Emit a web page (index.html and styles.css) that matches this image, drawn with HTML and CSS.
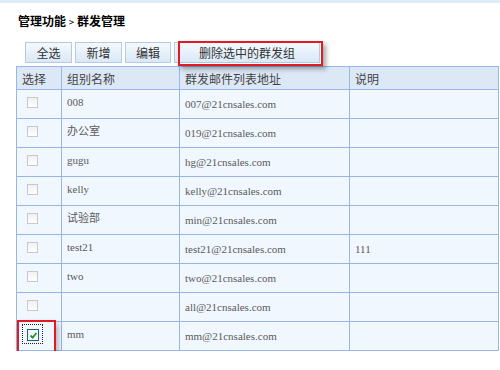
FILE: index.html
```html
<!DOCTYPE html>
<html lang="zh">
<head>
  <meta charset="UTF-8">
  <title>群发管理</title>
  <link rel="stylesheet" href="styles.css">
</head>
<body>
  <h1 class="title">管理功能 <span class="sep">&gt;</span> 群发管理</h1>

  <div class="toolbar">
    <button class="btn">全选</button>
    <button class="btn">新增</button>
    <button class="btn btn-narrow">编辑</button>
    <span class="callout"><button class="btn btn-wide">删除选中的群发组</button></span>
  </div>

  <table class="groups">
    <colgroup>
      <col class="c-pick"><col class="c-name"><col class="c-mail"><col class="c-note">
    </colgroup>
    <thead>
      <tr><th>选择</th><th>组别名称</th><th>群发邮件列表地址</th><th>说明</th></tr>
    </thead>
    <tbody>
      <tr><td class="pick"><span class="box"></span></td><td class="name">008</td><td class="mail">007@21cnsales.com</td><td class="mail"></td></tr>
      <tr><td class="pick"><span class="box"></span></td><td class="name">办公室</td><td class="mail">019@21cnsales.com</td><td class="mail"></td></tr>
      <tr><td class="pick"><span class="box"></span></td><td class="name">gugu</td><td class="mail">hg@21cnsales.com</td><td class="mail"></td></tr>
      <tr><td class="pick"><span class="box"></span></td><td class="name">kelly</td><td class="mail">kelly@21cnsales.com</td><td class="mail"></td></tr>
      <tr><td class="pick"><span class="box"></span></td><td class="name">试验部</td><td class="mail">min@21cnsales.com</td><td class="mail"></td></tr>
      <tr><td class="pick"><span class="box"></span></td><td class="name">test21</td><td class="mail">test21@21cnsales.com</td><td class="mail">111</td></tr>
      <tr><td class="pick"><span class="box"></span></td><td class="name">two</td><td class="mail">two@21cnsales.com</td><td class="mail"></td></tr>
      <tr><td class="pick"><span class="box"></span></td><td class="name"></td><td class="mail">all@21cnsales.com</td><td class="mail"></td></tr>
      <tr>
        <td class="pick marked">
          <span class="focus"><span class="box checked">
            <svg width="9" height="9" viewBox="0 0 9 9"><path d="M1.5 4.5 L3.6 6.6 L7.5 2" fill="none" stroke="#1d9a1d" stroke-width="1.8"/></svg>
          </span></span>
        </td>
        <td class="name">mm</td><td class="mail">mm@21cnsales.com</td><td class="mail"></td>
      </tr>
    </tbody>
  </table>
</body>
</html>
```

FILE: styles.css
```css
/* 群发管理页面 */
body {
  margin: 0;
  font-family: "Liberation Serif", "Noto Sans CJK SC", serif;
  font-size: 12px;
  color: #555;
  background: #fff;
  border-top: 3px solid #deebf8;
}
.title {
  margin: 0;
  padding: 9px 0 0 18px;
  font: bold 12px/18px "Noto Sans CJK SC", sans-serif;
  color: #000;
}
.title .sep {
  font-size: 10px;
  font-weight: normal;
}
/* 按钮栏 */
.toolbar {
  display: flex;
  gap: 3px;
  margin-top: 11px;
  padding-left: 25px;
}
.btn {
  width: 47px;
  height: 21px;
  padding: 0;
  border: 1px solid #b3cbe8;
  background: linear-gradient(#f5f9fd, #dae8f7);
  font: 12px "Noto Sans CJK SC", sans-serif;
  color: #333;
}
.btn-narrow {
  width: 46px;
}
.btn-wide {
  width: 146px;
}
.callout {
  position: relative;
  display: flex;
}
.callout::after {
  content: "";
  position: absolute;
  top: -1px;
  left: 4px;
  right: -3px;
  bottom: -3px;
  border: 2px solid #e21a22;
  box-shadow: 3px 3px 5px rgba(0,0,0,0.35);
}
/* 群发组列表 */
.groups {
  margin: 3px 0 0 16px;
  width: 482px;
  table-layout: fixed;
  border-collapse: collapse;
  border: 1px solid #97b8e6;
}
.c-pick { width: 45px; }
.c-name { width: 118px; }
.c-mail { width: 170px; }
.c-note { width: 149px; }
.groups th, .groups td {
  border: 1px solid #97b8e6;
  padding: 0 5px;
  text-align: left;
}
.groups thead tr {
  height: 23px;
}
.groups tbody tr {
  height: 29px;
}
.groups th {
  background: #dce8f6;
  font: normal 12px "Noto Sans CJK SC", sans-serif;
  color: #444;
}
.groups td {
  background: #f1f7fe;
  font-family: "Liberation Serif", "Noto Sans CJK SC", serif;
  font-size: 11px;
  line-height: 14px;
  color: #5a5a5a;
}
.groups td.name {
  vertical-align: top;
  padding-top: 5px;
}
.groups td.pick {
  vertical-align: top;
  padding: 7px 0 0 10px;
}
.box {
  display: block;
  width: 11px;
  height: 11px;
  box-sizing: border-box;
  border: 1px solid #c9c9c9;
  background: linear-gradient(#f0f0f0, #fff);
}
.box.checked {
  display: flex;
  align-items: center;
  justify-content: center;
  width: 12px;
  height: 12px;
  border-color: #1f5b8e;
  background: #f4f8fb;
}
.focus {
  display: block;
  width: 21px;
  height: 20px;
  box-sizing: border-box;
  margin: -5px 0 0 -5px;
  padding: 4px;
  border: 1px dotted #222;
}
.marked {
  position: relative;
}
.marked::after {
  content: "";
  position: absolute;
  top: -2px;
  left: 0;
  width: 39px;
  height: 33px;
  box-sizing: border-box;
  border: 2px solid #e21a22;
  box-shadow: 2px 4px 6px rgba(0,0,0,0.3);
}
```
